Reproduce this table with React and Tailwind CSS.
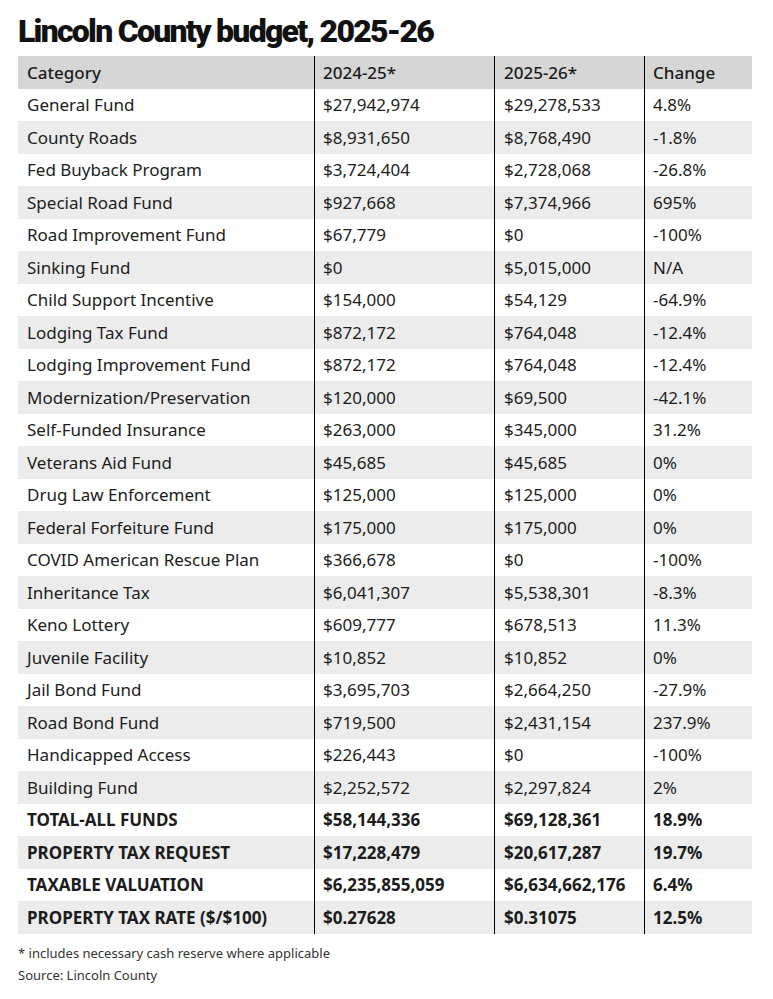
import React from "react";

const rows = [
  ["General Fund", "$27,942,974", "$29,278,533", "4.8%"],
  ["County Roads", "$8,931,650", "$8,768,490", "-1.8%"],
  ["Fed Buyback Program", "$3,724,404", "$2,728,068", "-26.8%"],
  ["Special Road Fund", "$927,668", "$7,374,966", "695%"],
  ["Road Improvement Fund", "$67,779", "$0", "-100%"],
  ["Sinking Fund", "$0", "$5,015,000", "N/A"],
  ["Child Support Incentive", "$154,000", "$54,129", "-64.9%"],
  ["Lodging Tax Fund", "$872,172", "$764,048", "-12.4%"],
  ["Lodging Improvement Fund", "$872,172", "$764,048", "-12.4%"],
  ["Modernization/Preservation", "$120,000", "$69,500", "-42.1%"],
  ["Self-Funded Insurance", "$263,000", "$345,000", "31.2%"],
  ["Veterans Aid Fund", "$45,685", "$45,685", "0%"],
  ["Drug Law Enforcement", "$125,000", "$125,000", "0%"],
  ["Federal Forfeiture Fund", "$175,000", "$175,000", "0%"],
  ["COVID American Rescue Plan", "$366,678", "$0", "-100%"],
  ["Inheritance Tax", "$6,041,307", "$5,538,301", "-8.3%"],
  ["Keno Lottery", "$609,777", "$678,513", "11.3%"],
  ["Juvenile Facility", "$10,852", "$10,852", "0%"],
  ["Jail Bond Fund", "$3,695,703", "$2,664,250", "-27.9%"],
  ["Road Bond Fund", "$719,500", "$2,431,154", "237.9%"],
  ["Handicapped Access", "$226,443", "$0", "-100%"],
  ["Building Fund", "$2,252,572", "$2,297,824", "2%"],
];

const boldRows = [
  ["TOTAL-ALL FUNDS", "$58,144,336", "$69,128,361", "18.9%"],
  ["PROPERTY TAX REQUEST", "$17,228,479", "$20,617,287", "19.7%"],
  ["TAXABLE VALUATION", "$6,235,855,059", "$6,634,662,176", "6.4%"],
  ["PROPERTY TAX RATE ($/$100)", "$0.27628", "$0.31075", "12.5%"],
];

function Row({ cells, bg, weight }) {
  return (
    <div
      className={`grid grid-cols-[296px_180px_150px_108px] h-[32.5px] items-center ${bg} ${weight}`}
    >
      <div className="pl-[9px] h-full flex items-center">{cells[0]}</div>
      <div className="pl-[8px] h-full flex items-center border-l border-black">{cells[1]}</div>
      <div className="pl-[9px] h-full flex items-center border-l border-black">{cells[2]}</div>
      <div className="pl-[8px] h-full flex items-center border-l border-black">{cells[3]}</div>
    </div>
  );
}

export default function App() {
  const all = [...rows.map((r) => [r, false]), ...boldRows.map((r) => [r, true])];
  return (
    <div
      className="w-[773px] h-[999px] bg-white text-[#1c1c1c] pl-[18px] pt-[12px]"
      style={{ fontFamily: '"Noto Sans", sans-serif' }}
    >
      <h1
        className="text-[32px] leading-[38px] font-black tracking-[-1.75px] text-[#111]"
        style={{ fontFamily: "Roboto, sans-serif" }}
      >
        Lincoln County budget, 2025-26
      </h1>
      <div className="mt-[6px] w-[734px] text-[17px]">
        <Row cells={["Category", "2024-25*", "2025-26*", "Change"]} bg="bg-[#d6d6d6]" weight="font-medium" />
        {all.map(([r, b], i) => (
          <Row
            key={i}
            cells={r}
            weight={b ? "font-bold" : "font-normal"}
            bg={i % 2 === 0 ? "bg-white" : "bg-[#ececec]"}
          />
        ))}
      </div>
      <div className="mt-[8px] text-[13px] leading-[22px] text-[#333]">
        <div>* includes necessary cash reserve where applicable</div>
        <div>Source: Lincoln County</div>
      </div>
    </div>
  );
}
